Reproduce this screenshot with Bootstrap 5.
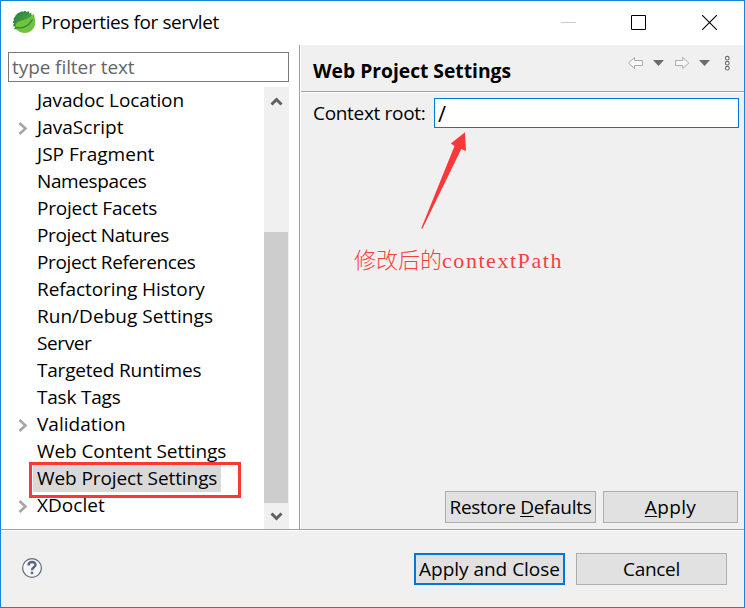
<!DOCTYPE html>
<html lang="en">
<head>
<meta charset="utf-8">
<title>Properties for servlet</title>
<link href="https://cdn.jsdelivr.net/npm/bootstrap@5.3.0/dist/css/bootstrap.min.css" rel="stylesheet">
<style>
body{font-family:"Open Sans","Noto Sans",sans-serif;font-size:19px;line-height:27px;color:#000;letter-spacing:-.2px;overflow:hidden}
.dialog{width:745px;height:608px;border:1px solid #1883d7;background:#fff}
.titlebar{height:44px;padding:0 27px 2px 10px}
.titlebar .caption{margin-left:4px;letter-spacing:-.4px}
.win-controls{gap:55px}
.win-controls svg{margin-top:1px}
.main-area{height:484px}
.sidebar{width:298px;padding:7px 0 0 7px}
.filter{width:281px;height:30px;border:1px solid #7a7a7a;border-radius:0;padding:0 3px;font-size:19px;line-height:28px;color:#000;letter-spacing:-.08px}
.filter::placeholder{color:#666;opacity:1}
.tree-area{width:281px;height:442px;margin-top:5px}
.tree-row{height:27px}
.twisty{width:25px;padding-left:10px}
.tree-label{padding:0 4px;height:27px;line-height:26px;white-space:nowrap}
.tree-label.wide{letter-spacing:-.09px}
.tree-label.wider{letter-spacing:.03px}
.tree-label.tight{letter-spacing:-.38px}
.tree-label.selected{background:#d9d9d9}
.highlight{left:21px;top:375px;width:212px;height:36px;border:3px solid #fb3838}
.scroller{width:25px;background:#f0f0f0}
.thumb{width:24px;height:271px;background:#cdcdcd;margin-top:145px}
.page{background:#f0f0f0;border-left:1px solid #a0a0a0;box-shadow:inset 1px 0 #fff}
.page-head{height:47px;padding:0 11px 0 12px;border-bottom:1px solid #a0a0a0;box-shadow:0 1px #fff;margin-left:1px}
.page-title{font-size:19.3px;font-weight:700;line-height:52px;letter-spacing:-.02px}
.field{padding:6px 5px 0 13px}
.field label{letter-spacing:-.32px;padding-top:2px;white-space:nowrap}
.ctx-input{width:305px;height:30px;border:1px solid #0078d7;background:#fff;border-radius:0;padding:0 3px;line-height:28px;font-size:22px;color:#000}
.note-arrow{left:120px;top:86px}
.note{left:54px;top:198px;color:#f93f3f;font:22px/30px "Liberation Serif","Noto Sans CJK SC",serif;letter-spacing:0;white-space:nowrap}
.note .cjk{font-family:"Noto Sans CJK SC",sans-serif;font-weight:300}
.note .latin{letter-spacing:1.55px}
.page-actions{padding:0 6px 6px 0;gap:7px}
.dbtn{width:151px;height:32px;border:1px solid #adadad;border-radius:0;background:#e1e1e1;color:#000;padding:0;font-size:19px;line-height:30px;letter-spacing:-.3px;white-space:nowrap}
.dbtn.narrow{width:135px;letter-spacing:.4px}
.dbtn.default{border:2px solid #0078d7;line-height:28px;letter-spacing:-.02px}
.dbtn u{text-underline-offset:2px;text-decoration-thickness:1px}
.footer-bar{height:78px;background:#f0f0f0;border-top:1px solid #a0a0a0;box-shadow:inset 0 1px #fff;padding:0 17px 0 20px}
.footer-actions{gap:11px}
</style>
</head>
<body>
<div class="dialog d-flex flex-column">
  <header class="titlebar d-flex align-items-center justify-content-between">
    <div class="d-flex align-items-center">
      <svg width="26" height="26" viewBox="0 0 26 26">
        <defs><linearGradient id="leaf" x1="0" y1="0" x2="1" y2="1"><stop offset="0" stop-color="#1f8040"/><stop offset="1" stop-color="#6dbb3c"/></linearGradient></defs>
        <circle cx="13" cy="13" r="10.500" fill="url(#leaf)"/>
        <path d="M5 20A10.800 10.800 0 0 1 20 5" fill="none" stroke="#2f8a45" stroke-width="2.400" stroke-dasharray="1.800 1.400"/>
        <path d="M22.500 4.500C25.500 12 25 21 17 23.500 10 25 5 21 4.500 17 5 10 17 13 22.500 4.500Z" fill="#72c242"/>
        <path d="M5 18.500C12 20 18 16.500 21.500 10.500" fill="none" stroke="#2d8a35" stroke-width="1.400"/>
      </svg>
      <span class="caption">Properties for servlet</span>
    </div>
    <div class="win-controls d-flex align-items-center">
      <svg width="15" height="15"><path d="M0 7.500H15" stroke="#c8c8c8"/></svg>
      <svg width="16" height="15"><path d="M.5.5H14.500V14.500H.5Z" fill="none" stroke="#000"/></svg>
      <svg width="15" height="15"><path d="M0 0L15 15M15 0L0 15" stroke="#000" stroke-width="1.100"/></svg>
    </div>
  </header>

  <main class="main-area d-flex">
    <section class="sidebar flex-shrink-0">
      <input class="filter d-block" placeholder="type filter text" aria-label="Filter">
      <div class="tree-area position-relative d-flex justify-content-between">
        <div>
          <div class="tree-row d-flex"><span class="twisty"></span><span class="tree-label wide">Javadoc Location</span></div>
          <div class="tree-row d-flex"><span class="twisty"><svg class="d-block mt-2" width="10" height="14"><path d="M1.500 1L7.500 6.500 1.500 12" fill="none" stroke="#a6a6a6" stroke-width="2.600"/></svg></span><span class="tree-label wider">JavaScript</span></div>
          <div class="tree-row d-flex"><span class="twisty"></span><span class="tree-label wider">JSP Fragment</span></div>
          <div class="tree-row d-flex"><span class="twisty"></span><span class="tree-label tight">Namespaces</span></div>
          <div class="tree-row d-flex"><span class="twisty"></span><span class="tree-label">Project Facets</span></div>
          <div class="tree-row d-flex"><span class="twisty"></span><span class="tree-label tight">Project Natures</span></div>
          <div class="tree-row d-flex"><span class="twisty"></span><span class="tree-label tight">Project References</span></div>
          <div class="tree-row d-flex"><span class="twisty"></span><span class="tree-label wide">Refactoring History</span></div>
          <div class="tree-row d-flex"><span class="twisty"></span><span class="tree-label wider">Run/Debug Settings</span></div>
          <div class="tree-row d-flex"><span class="twisty"></span><span class="tree-label tight">Server</span></div>
          <div class="tree-row d-flex"><span class="twisty"></span><span class="tree-label">Targeted Runtimes</span></div>
          <div class="tree-row d-flex"><span class="twisty"></span><span class="tree-label">Task Tags</span></div>
          <div class="tree-row d-flex"><span class="twisty"><svg class="d-block mt-2" width="10" height="14"><path d="M1.500 1L7.500 6.500 1.500 12" fill="none" stroke="#a6a6a6" stroke-width="2.600"/></svg></span><span class="tree-label wider">Validation</span></div>
          <div class="tree-row d-flex"><span class="twisty"></span><span class="tree-label wide">Web Content Settings</span></div>
          <div class="tree-row d-flex"><span class="twisty"></span><span class="tree-label wide selected">Web Project Settings</span></div>
          <div class="tree-row d-flex"><span class="twisty"><svg class="d-block mt-2" width="10" height="14"><path d="M1.500 1L7.500 6.500 1.500 12" fill="none" stroke="#a6a6a6" stroke-width="2.600"/></svg></span><span class="tree-label wider">XDoclet</span></div>
        </div>
        <div class="highlight position-absolute"></div>
        <div class="scroller position-relative">
          <svg class="position-absolute top-0 start-0" width="25" height="26"><path d="M7.500 17.500L12.500 12.500 17.500 17.500" fill="none" stroke="#606060" stroke-width="3"/></svg>
          <div class="thumb"></div>
          <svg class="position-absolute bottom-0 start-0" width="25" height="26"><path d="M7.500 10.500L12.500 15.500 17.500 10.500" fill="none" stroke="#606060" stroke-width="3"/></svg>
        </div>
      </div>
    </section>

    <section class="page flex-grow-1 d-flex flex-column justify-content-between position-relative">
      <div>
        <div class="page-head d-flex justify-content-between">
          <h1 class="page-title m-0">Web Project Settings</h1>
          <svg width="106" height="36" viewBox="627 45 106 36">
            <path d="M628.500 63L634.500 57.500V60.500H642.500V65.500H634.500V68.500Z" fill="#f8f8f8" stroke="#adadad"/>
            <path d="M653 60H664L658.500 66Z" fill="#6b6b70"/>
            <path d="M688.800 63L682.800 57.500V60.500H675.500V65.500H682.800V68.500Z" fill="#f8f8f8" stroke="#adadad"/>
            <path d="M699 60H710L704.500 66Z" fill="#6b6b70"/>
            <g fill="#fff" stroke="#707070" stroke-width="1.200"><circle cx="727.300" cy="58.200" r="1.800"/><circle cx="727.300" cy="63.200" r="1.800"/><circle cx="727.300" cy="68.200" r="1.800"/></g>
          </svg>
        </div>
        <div class="field d-flex justify-content-between">
          <label for="ctx">Context root:</label>
          <input id="ctx" class="ctx-input" value="/">
        </div>
      </div>
      <svg class="note-arrow position-absolute" width="50" height="100" viewBox="420 131 50 100"><path d="M465 132.300L466 151 461.300 149 422.500 228.500H421.200L454.500 146 450.800 143.500Z" fill="#fb3838"/></svg>
      <div class="note position-absolute"><span class="cjk">修改后的</span><span class="latin">contextPath</span></div>
      <div class="page-actions d-flex justify-content-end">
        <button class="btn dbtn">Restore <u>D</u>efaults</button>
        <button class="btn dbtn narrow"><u>A</u>pply</button>
      </div>
    </section>
  </main>

  <footer class="footer-bar d-flex align-items-center justify-content-between">
    <svg width="22" height="22" viewBox="0 1 22 22"><circle cx="11" cy="11" r="9.400" fill="#fff" fill-opacity=".4" stroke="#5c6b88" stroke-width="1.200"/><path d="M7.500 8.500C7.500 3.800 14.700 4 14.500 8 14.400 10.300 11 10.300 11 13.200" fill="none" stroke="#566785" stroke-width="2.400"/><rect x="9.800" y="14.700" width="2.400" height="2.400" fill="#566785"/></svg>
    <div class="footer-actions d-flex">
      <button class="btn dbtn default">Apply and Close</button>
      <button class="btn dbtn">Cancel</button>
    </div>
  </footer>
</div>
<script src="https://cdn.jsdelivr.net/npm/bootstrap@5.3.0/dist/js/bootstrap.bundle.min.js"></script>
</body>
</html>
